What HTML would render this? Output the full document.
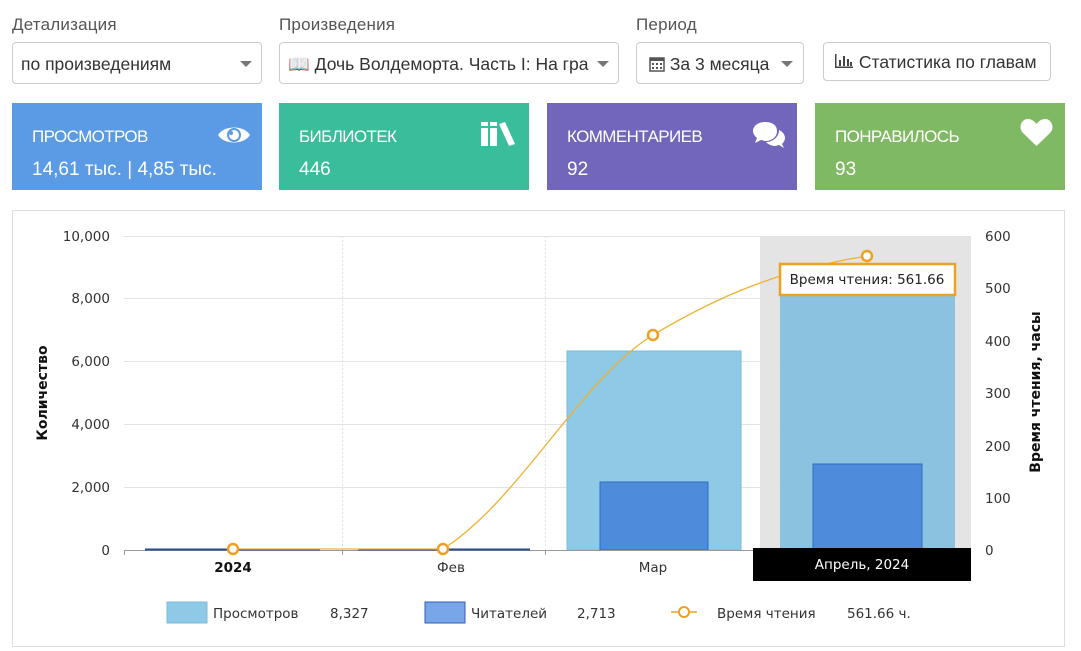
<!DOCTYPE html>
<html><head><meta charset="utf-8"><style>
*{box-sizing:border-box;margin:0;padding:0}
body{width:1081px;height:651px;background:#fff;font-family:"DejaVu Sans","Liberation Sans",sans-serif;position:relative;overflow:hidden;color:#333}
.lbl{position:absolute;top:15px;font-size:17px;color:#555;font-family:"Liberation Sans",sans-serif;letter-spacing:0.2px}
.sel{position:absolute;top:42px;height:42px;border:1px solid #ccc;border-radius:4px;font-size:17.5px;line-height:42px;padding-left:8px;color:#333;white-space:nowrap;overflow:hidden;font-family:"Liberation Sans",sans-serif}
.caret{position:absolute;top:18px;width:0;height:0;border-left:6px solid transparent;border-right:6px solid transparent;border-top:6px solid #777}
.card{position:absolute;top:103px;height:87px;color:#fff;font-family:"Liberation Sans",sans-serif}
.card .t{position:absolute;left:20px;top:24px;font-size:17px;letter-spacing:-0.6px}
.card .v{position:absolute;left:20px;top:56px;font-size:19px}
.card svg{position:absolute}
</style></head><body>
<div class="lbl" style="left:12px">Детализация</div>
<div class="lbl" style="left:279px">Произведения</div>
<div class="lbl" style="left:636px">Период</div>
<div class="sel" style="left:12px;width:250px">по произведениям<span class="caret" style="left:227px"></span></div>
<div class="sel" style="left:279px;width:340px;padding-right:30px"><span style="color:#3a8fd0">📖</span> Дочь Волдеморта. Часть I: На гра<span class="caret" style="left:317px"></span></div>
<div class="sel" style="left:636px;width:168px"><svg width="16" height="16" style="vertical-align:-2px;margin-left:4px"><rect x="1" y="2" width="14" height="13" fill="none" stroke="#555" stroke-width="1.5"/><rect x="1" y="2" width="14" height="3" fill="#555"/><g fill="#555"><rect x="3" y="7" width="2" height="2"/><rect x="7" y="7" width="2" height="2"/><rect x="11" y="7" width="2" height="2"/><rect x="3" y="11" width="2" height="2"/><rect x="7" y="11" width="2" height="2"/><rect x="11" y="11" width="2" height="2"/></g></svg> За 3 месяца<span class="caret" style="left:144px"></span></div>
<div class="sel" style="left:823px;width:228px;height:39px;line-height:39px"><svg width="20" height="16" style="vertical-align:-1px;margin-left:2px"><g fill="#444"><rect x="1" y="1" width="1.5" height="14"/><rect x="1" y="13.5" width="18" height="1.5"/><rect x="5" y="7" width="2" height="6"/><rect x="9" y="3" width="2" height="10"/><rect x="13" y="6" width="2" height="7"/><rect x="16" y="9" width="2" height="4"/></g></svg> Статистика по главам</div>

<div class="card" style="left:12px;width:250px;background:#5b9be6"><div class="t">ПРОСМОТРОВ</div><div class="v">14,61 тыс. | 4,85 тыс.</div>
<svg style="left:205px;top:20px" width="34" height="24" viewBox="0 0 34 24"><path d="M1 12C7 2 27 2 33 12C27 22 7 22 1 12Z" fill="#fff"/><circle cx="17" cy="12" r="7" fill="#5b9be6"/><circle cx="17" cy="12" r="5" fill="#fff"/><circle cx="14" cy="10" r="2" fill="#5b9be6"/></svg></div>
<div class="card" style="left:279px;width:250px;background:#3abd9b"><div class="t">БИБЛИОТЕК</div><div class="v">446</div>
<svg style="left:201px;top:18px" width="36" height="26" viewBox="0 0 36 26"><g fill="#fff"><rect x="1" y="1" width="7" height="24"/><rect x="10" y="1" width="7" height="24"/><path d="M19 3l6-2 10 22-6 2z"/></g><g fill="#3abd9b"><rect x="1" y="5" width="7" height="2"/><rect x="10" y="5" width="7" height="2"/></g></svg></div>
<div class="card" style="left:547px;width:250px;background:#7266ba"><div class="t">КОММЕНТАРИЕВ</div><div class="v">92</div>
<svg style="left:205px;top:18px" width="34" height="28" viewBox="0 0 34 28"><path d="M13 1C6 1 1 5 1 10c0 3 2 5 4 7l-2 5 6-3c1 0 3 1 4 1 7 0 12-4 12-10S20 1 13 1z" fill="#fff"/><path d="M27 9c4 2 6 5 6 8 0 2-1 4-3 6l2 4-5-3c-1 0-3 1-4 1-4 0-7-2-9-4 7 0 13-5 13-12z" fill="#fff"/></svg></div>
<div class="card" style="left:815px;width:250px;background:#80b963"><div class="t">ПОНРАВИЛОСЬ</div><div class="v">93</div>
<svg style="left:205px;top:15px" width="33" height="29" viewBox="0 0 33 29"><path d="M16.5 28L3 15C-2 10 1 1 8 1c4 0 7 3 8.5 5C18 4 21 1 25 1c7 0 10 9 5 14z" fill="#fff"/></svg></div>

<div style="position:absolute;left:12px;top:210px;width:1053px;height:437px;border:1px solid #ddd"></div>
<svg style="position:absolute;left:0;top:0" width="1081" height="651" font-family="DejaVu Sans, Liberation Sans, sans-serif" font-size="13.5">
<rect x="760" y="236" width="211" height="314" fill="#e4e4e4"/>
<g stroke="#e3e3e3" stroke-width="1">
<line x1="124" y1="236.5" x2="971" y2="236.5"/><line x1="124" y1="298.5" x2="971" y2="298.5"/><line x1="124" y1="361.5" x2="971" y2="361.5"/><line x1="124" y1="424.5" x2="971" y2="424.5"/><line x1="124" y1="487.5" x2="971" y2="487.5"/>
<line x1="342.5" y1="236" x2="342.5" y2="550" stroke-dasharray="2,2"/><line x1="545.5" y1="236" x2="545.5" y2="550" stroke-dasharray="2,2"/>
</g>
<rect x="567" y="351" width="174" height="199" fill="#8ecae6" stroke="#7bbbd9"/>
<rect x="600" y="482" width="108" height="68" fill="#4f8bdb" stroke="#2f6cc0"/>
<rect x="780" y="289" width="175" height="261" fill="#8ac2e0"/>
<rect x="813" y="464" width="109" height="86" fill="#4f8bdb" stroke="#2f6cc0"/>
<line x1="124" y1="550.5" x2="971" y2="550.5" stroke="#999"/>
<line x1="145" y1="549.5" x2="320" y2="549.5" stroke="#2a4a8a" stroke-width="2"/>
<line x1="358" y1="549.5" x2="530" y2="549.5" stroke="#2a4a8a" stroke-width="2"/>
<g stroke="#999"><line x1="124.5" y1="550" x2="124.5" y2="555"/><line x1="342.5" y1="550" x2="342.5" y2="555"/><line x1="545.5" y1="550" x2="545.5" y2="555"/></g>
<path d="M233 549 L443 549 C520 500 580 380 653 335 C720 295 780 270 867 256" fill="none" stroke="#f0b030" stroke-width="1.3"/>
<g fill="#fff" stroke="#f0a020" stroke-width="2.5"><circle cx="233" cy="549" r="5"/><circle cx="443" cy="549" r="5"/><circle cx="653" cy="335" r="5"/><circle cx="867" cy="256" r="5"/></g>
<rect x="780" y="264" width="175" height="31" fill="#fff" stroke="#f0a020" stroke-width="2.5"/>
<text x="867" y="284" text-anchor="middle" font-size="13.5" fill="#222">Время чтения: 561.66</text>
<rect x="753" y="548" width="218" height="33" fill="#000"/>
<text x="862" y="569" text-anchor="middle" fill="#fff">Апрель, 2024</text>
<g fill="#333" text-anchor="end"><text x="110" y="241">10,000</text><text x="110" y="303">8,000</text><text x="110" y="366">6,000</text><text x="110" y="429">4,000</text><text x="110" y="492">2,000</text><text x="110" y="555">0</text></g>
<g fill="#333"><text x="985" y="241">600</text><text x="985" y="293">500</text><text x="985" y="346">400</text><text x="985" y="398">300</text><text x="985" y="451">200</text><text x="985" y="503">100</text><text x="985" y="555">0</text></g>
<text x="233" y="572" text-anchor="middle" font-weight="bold" fill="#111">2024</text>
<text x="451" y="572" text-anchor="middle" fill="#333">Фев</text>
<text x="653" y="572" text-anchor="middle" fill="#333">Мар</text>
<text transform="translate(47,393) rotate(-90)" text-anchor="middle" font-weight="bold" font-size="14" fill="#111">Количество</text>
<text transform="translate(1040,392) rotate(-90)" text-anchor="middle" font-weight="bold" font-size="14" fill="#111">Время чтения, часы</text>
<rect x="167" y="602" width="40" height="21" fill="#8ecae6" stroke="#7bbbd9"/>
<text x="213" y="618" fill="#333">Просмотров</text><text x="330" y="618" fill="#333">8,327</text>
<rect x="425" y="602" width="40" height="21" fill="#79a6e8" stroke="#2f5fb0"/>
<text x="471" y="618" fill="#333">Читателей</text><text x="577" y="618" fill="#333">2,713</text>
<line x1="671" y1="612" x2="697" y2="612" stroke="#f0a020" stroke-width="1.5"/><circle cx="684" cy="612" r="5" fill="#fff" stroke="#f0a020" stroke-width="2"/>
<text x="717" y="618" fill="#333">Время чтения</text><text x="847" y="618" fill="#333">561.66 ч.</text>
</svg>
</body></html>
